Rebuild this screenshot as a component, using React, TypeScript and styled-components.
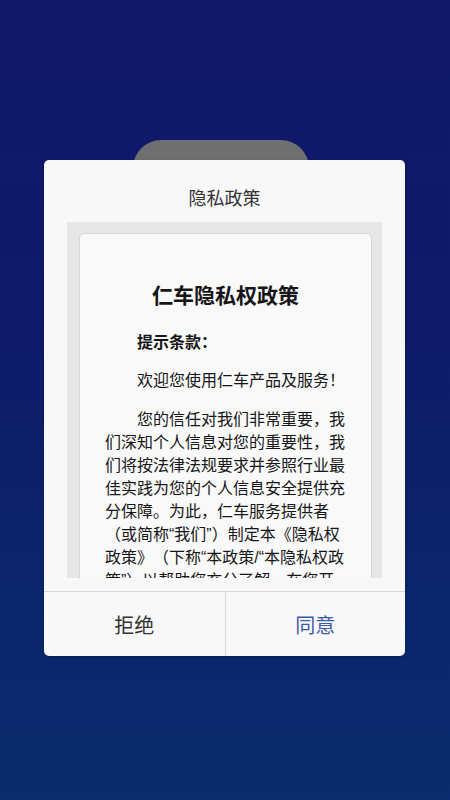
import React from "react";
import styled, { createGlobalStyle } from "styled-components";

const Global = createGlobalStyle`
  html, body { margin: 0; padding: 0; }
  body {
    width: 450px;
    height: 800px;
    overflow: hidden;
    font-family: "Noto Sans CJK SC", "Noto Sans", sans-serif;
  }
`;

const Screen = styled.div`
  width: 450px;
  height: 800px;
  background: linear-gradient(180deg, #10176a 0%, #0f1a69 40%, #0b266b 75%, #0a2b6d 100%);
  display: flex;
  flex-direction: column;
  align-items: flex-start;
  padding-top: 140px;
  box-sizing: border-box;
`;

const Tab = styled.div`
  width: 176px;
  height: 46px;
  margin-left: 133px;
  margin-bottom: -26px;
  background: #6f6f6f;
  border-radius: 28px 28px 0 0;
`;

const Dialog = styled.div`
  position: relative;
  z-index: 1;
  margin-left: 44px;
  width: 361px;
  background: #f8f8f8;
  border-radius: 5px;
  display: flex;
  flex-direction: column;
  box-shadow: 0 1px 3px rgba(0, 0, 0, 0.25);
`;

const Title = styled.div`
  height: 62px;
  box-sizing: border-box;
  padding-top: 25px;
  text-align: center;
  font-size: 18px;
  line-height: 24px;
  color: #333333;
`;

const Frame = styled.div`
  margin: 0 23px 13px 23px;
  height: 356px;
  background: #e7e7e7;
  padding: 11px 10px 0 12px;
  box-sizing: border-box;
  overflow: hidden;
`;

const Card = styled.div`
  background: #f9f9f9;
  border: 1px solid #d6d6d6;
  border-radius: 5px;
  padding: 45px 25px 0 25px;
  min-height: 400px;
  color: #161616;
`;

const Heading = styled.h1`
  margin: 0 0 22px;
  font-size: 21px;
  line-height: 30px;
  font-weight: 700;
  text-align: center;
`;

const Para = styled.p<{ $bold?: boolean; $gap?: number }>`
  margin: 0 0 ${(p) => p.$gap ?? 16}px;
  font-family: "Liberation Sans", "Noto Sans CJK SC", sans-serif;
  font-size: 16px;
  line-height: 23px;
  text-indent: 2em;
  font-weight: ${(p) => (p.$bold ? 700 : 400)};
  line-break: strict;
  text-spacing-trim: space-all;
`;

const Actions = styled.div`
  display: grid;
  grid-template-columns: 1fr 1fr;
  border-top: 1px solid #d9d9d9;
  height: 64px;
`;

const Action = styled.div<{ $primary?: boolean }>`
  display: flex;
  align-items: center;
  justify-content: center;
  cursor: pointer;
  font-size: 20px;
  color: ${(p) => (p.$primary ? "#3d5ba9" : "#333333")};
  & + & {
    border-left: 1px solid #d9d9d9;
  }
`;

export default function App() {
  return (
    <>
      <Global />
      <Screen lang="zh-CN">
        <Tab />
        <Dialog>
          <Title>隐私政策</Title>
          <Frame>
            <Card>
              <Heading>仁车隐私权政策</Heading>
              <Para $bold $gap={15}>提示条款：</Para>
              <Para $gap={16}>欢迎您使用仁车产品及服务！</Para>
              <Para>
                您的信任对我们非常重要，我们深知个人信息对您的重要性，我们将按法律法规要求并参照行业最佳实践为您的个人信息安全提供充分保障。为此，仁车服务提供者（或简称“我们”）制定本《隐私权政策》（下称“本政策/“本隐私权政策”）以帮助您充分了解，在您开
              </Para>
            </Card>
          </Frame>
          <Actions>
            <Action role="button">拒绝</Action>
            <Action role="button" $primary>同意</Action>
          </Actions>
        </Dialog>
      </Screen>
    </>
  );
}
